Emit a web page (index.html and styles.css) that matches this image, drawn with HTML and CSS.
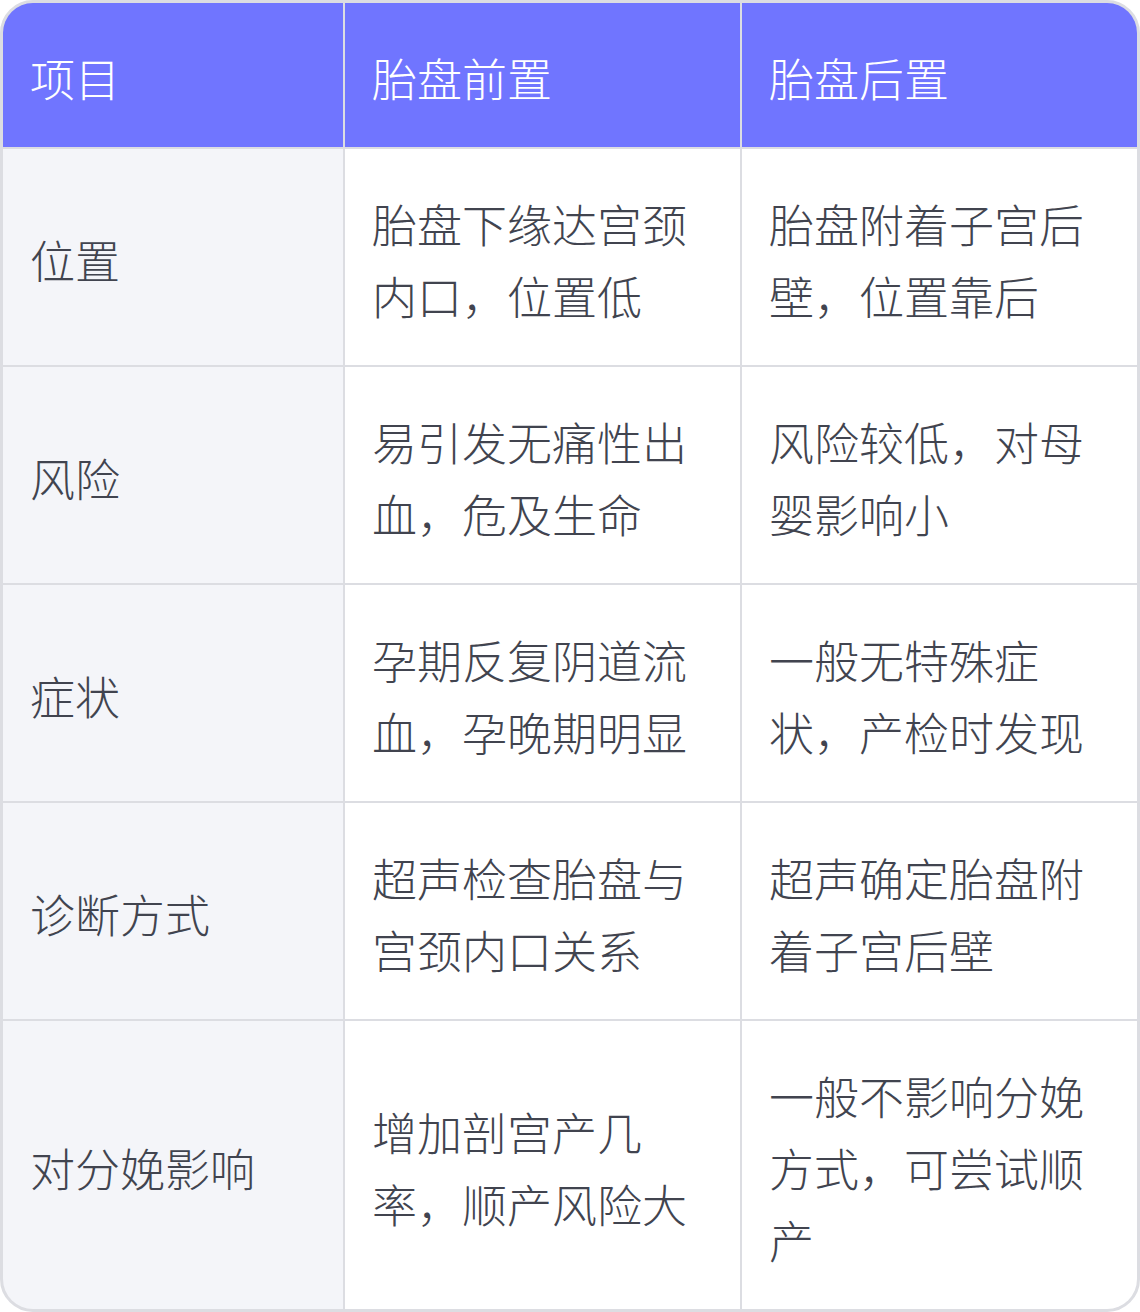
FILE: index.html
```html
<!DOCTYPE html>
<html lang="zh-CN">
<head>
<meta charset="utf-8">
<title>胎盘前置与胎盘后置</title>
<link rel="stylesheet" href="styles.css">
</head>
<body>
<div class="table">
  <div class="cell head">项目</div>
  <div class="cell head">胎盘前置</div>
  <div class="cell head">胎盘后置</div>

  <div class="cell label">位置</div>
  <div class="cell">胎盘下缘达宫颈内口，位置低</div>
  <div class="cell">胎盘附着子宫后壁，位置靠后</div>

  <div class="cell label">风险</div>
  <div class="cell">易引发无痛性出血，危及生命</div>
  <div class="cell">风险较低，对母婴影响小</div>

  <div class="cell label">症状</div>
  <div class="cell">孕期反复阴道流血，孕晚期明显</div>
  <div class="cell">一般无特殊症状，产检时发现</div>

  <div class="cell label">诊断方式</div>
  <div class="cell">超声检查胎盘与宫颈内口关系</div>
  <div class="cell">超声确定胎盘附着子宫后壁</div>

  <div class="cell label">对分娩影响</div>
  <div class="cell">增加剖宫产几率，顺产风险大</div>
  <div class="cell">一般不影响分娩方式，可尝试顺产</div>
</div>
</body>
</html>
```
FILE: styles.css
```css
html, body {
  margin: 0;
  padding: 0;
  background: #ffffff;
}
.table {
  width: 1140px;
  box-sizing: border-box;
  border: 3px solid #dcdde2;
  border-radius: 33px;
  overflow: hidden;
  display: grid;
  grid-template-columns: 340px 395px 395px;
  gap: 2px;
  background: #dcdde2;
  font-family: "Noto Sans CJK SC", "Noto Sans", sans-serif;
  font-weight: 300;
  font-size: 45px;
  line-height: 72px;
  color: #41444f;
}
.cell {
  background: #ffffff;
  padding: 39px 27px 33px;
  display: flex;
  align-items: center;
}
.cell.head {
  background: #7075ff;
  color: #ffffff;
}
.cell.label {
  background: #f4f5f9;
}
```
